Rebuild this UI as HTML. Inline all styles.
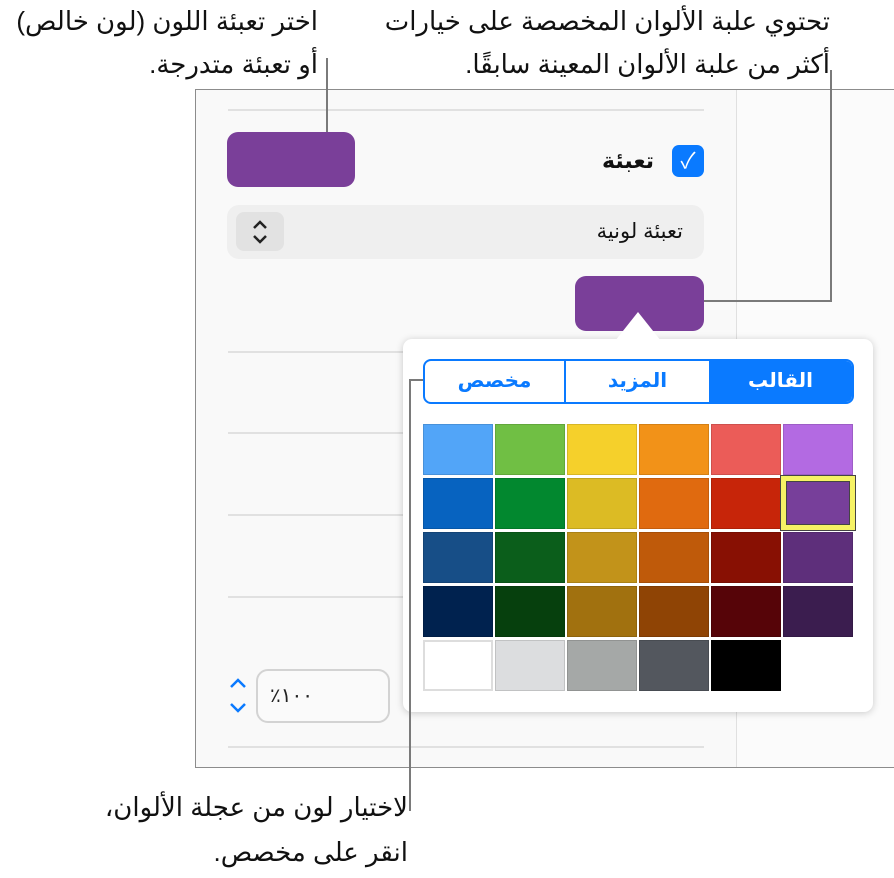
<!DOCTYPE html><html><head><meta charset="utf-8"><style>
body{margin:0;width:894px;height:878px;background:#fff;position:relative;overflow:hidden;font-family:"Liberation Sans","Noto Sans CJK SC","DejaVu Sans",sans-serif}
.a{position:absolute}
.t{position:absolute;direction:rtl;font-size:26px;color:#111;white-space:nowrap;line-height:43px}
.ln{position:absolute;background:#7a7a7a}
.hl{position:absolute;height:2px;background:#e1e1e1}
.c{position:absolute;width:70px;height:51px;box-sizing:border-box;border:1px solid rgba(0,0,0,.12)}
</style></head><body>
<div class="t" style="right:64px;top:0">تحتوي علبة الألوان المخصصة على خيارات</div>
<div class="t" style="right:64px;top:43px">أكثر من علبة الألوان المعينة سابقًا.</div>
<div class="t" style="right:576px;top:0">اختر تعبئة اللون (لون خالص)</div>
<div class="t" style="right:576px;top:43px">أو تعبئة متدرجة.</div>

<div class="a" style="left:195px;top:89px;width:697px;height:677px;border:1px solid #8c8c8c;background:#f9f9f9"></div>
<div class="a" style="left:736px;top:90px;width:157px;height:677px;background:#fbfbfb;border-left:1px solid #e0e0e0"></div>
<div class="hl" style="left:228px;top:109px;width:476px"></div>
<div class="hl" style="left:228px;top:351px;width:200px"></div>
<div class="hl" style="left:228px;top:432px;width:200px"></div>
<div class="hl" style="left:228px;top:514px;width:200px"></div>
<div class="hl" style="left:228px;top:596px;width:200px"></div>
<div class="hl" style="left:228px;top:746px;width:476px"></div>

<div class="a" style="left:227px;top:132px;width:128px;height:55px;border-radius:11px;background:#7a3f99"></div>
<div class="a" style="left:672px;top:145px;width:32px;height:32px;border-radius:7px;background:#0a7aff;color:#fff;font-size:22px;text-align:center;line-height:32px">✓</div>
<div class="t" style="right:240px;top:139px;font-weight:bold;font-size:22px">تعبئة</div>
<div class="a" style="left:227px;top:205px;width:477px;height:54px;border-radius:12px;background:#efefef"></div>
<div class="a" style="left:236px;top:212px;width:48px;height:39px;border-radius:8px;background:#e2e2e2"></div>
<svg class="a" style="left:248px;top:218px" width="24" height="28"><path d="M6 10 L12 4 L18 10 M6 18 L12 24 L18 18" stroke="#222" stroke-width="2.5" fill="none"/></svg>
<div class="t" style="right:211px;top:210px;font-size:21px">تعبئة لونية</div>
<div class="a" style="left:575px;top:276px;width:129px;height:55px;border-radius:11px;background:#7a3f99"></div>

<div class="a" style="left:403px;top:339px;width:470px;height:373px;border-radius:9px;background:#fff;box-shadow:0 1px 8px rgba(0,0,0,.2)"></div>
<svg class="a" style="left:615px;top:310px" width="46" height="31"><path d="M0 31 L23 2 L46 31Z" fill="#fff"/></svg>
<div class="a" style="left:423px;top:359px;width:431px;height:45px;box-sizing:border-box;border:2px solid #0a7aff;border-radius:8px;overflow:hidden;display:flex;direction:rtl;font-size:20px;font-weight:bold">
<div style="width:143px;background:#0a7aff;color:#fff;text-align:center;line-height:41px">القالب</div>
<div style="width:143px;color:#0a7aff;text-align:center;line-height:41px;border-left:2px solid #0a7aff">المزيد</div>
<div style="flex:1;color:#0a7aff;text-align:center;line-height:41px">مخصص</div></div>

<div class="c" style="left:423px;top:424px;background:#52a5f8"></div><div class="c" style="left:495px;top:424px;background:#70bf44"></div><div class="c" style="left:567px;top:424px;background:#f5d02b"></div><div class="c" style="left:639px;top:424px;background:#f29218"></div><div class="c" style="left:711px;top:424px;background:#eb5c58"></div><div class="c" style="left:783px;top:424px;background:#b36ae2"></div>
<div class="c" style="left:423px;top:478px;background:#0763c0"></div><div class="c" style="left:495px;top:478px;background:#02882f"></div><div class="c" style="left:567px;top:478px;background:#dcbb24"></div><div class="c" style="left:639px;top:478px;background:#e06a0f"></div><div class="c" style="left:711px;top:478px;background:#c72509"></div>
<div class="c" style="left:423px;top:532px;background:#174e87"></div><div class="c" style="left:495px;top:532px;background:#0b5e1b"></div><div class="c" style="left:567px;top:532px;background:#c2931a"></div><div class="c" style="left:639px;top:532px;background:#bf5a0a"></div><div class="c" style="left:711px;top:532px;background:#881003"></div><div class="c" style="left:783px;top:532px;background:#5e2f7b"></div>
<div class="c" style="left:423px;top:586px;background:#00224f"></div><div class="c" style="left:495px;top:586px;background:#06400d"></div><div class="c" style="left:567px;top:586px;background:#a1710f"></div><div class="c" style="left:639px;top:586px;background:#8f4405"></div><div class="c" style="left:711px;top:586px;background:#560408"></div><div class="c" style="left:783px;top:586px;background:#3b1d4f"></div>
<div class="c" style="left:423px;top:640px;background:#fff;border:2px solid #ddd"></div><div class="c" style="left:495px;top:640px;background:#dcdddf"></div><div class="c" style="left:567px;top:640px;background:#a5a8a7"></div><div class="c" style="left:639px;top:640px;background:#53575e"></div><div class="c" style="left:711px;top:640px;background:#000"></div>
<div class="a" style="left:780px;top:475px;width:76px;height:56px;box-sizing:border-box;border:1px solid #444;background:#f6f265;padding:5px"><div style="width:100%;height:100%;box-sizing:border-box;border:1px solid #444;background:#773f9a"></div></div>

<svg class="a" style="left:227px;top:676px" width="22" height="40"><path d="M4 11 L11 4 L18 11 M4 28 L11 35 L18 28" stroke="#0a7aff" stroke-width="2.5" fill="none"/></svg>
<div class="a" style="left:256px;top:669px;width:134px;height:54px;box-sizing:border-box;border:2px solid #d3d3d3;border-radius:12px;background:#fafafa;font-size:20px;line-height:50px;padding-left:12px;color:#222">٪١٠٠</div>

<div class="ln" style="left:326px;top:58px;width:2px;height:74px"></div>
<div class="ln" style="left:830px;top:70px;width:2px;height:232px"></div>
<div class="ln" style="left:704px;top:300px;width:128px;height:2px"></div>
<div class="ln" style="left:409px;top:379px;width:2px;height:432px"></div>
<div class="ln" style="left:409px;top:379px;width:14px;height:2px"></div>

<div class="t" style="right:486px;top:786px">لاختيار لون من عجلة الألوان،</div>
<div class="t" style="right:486px;top:831px">انقر على مخصص.</div>
</body></html>
